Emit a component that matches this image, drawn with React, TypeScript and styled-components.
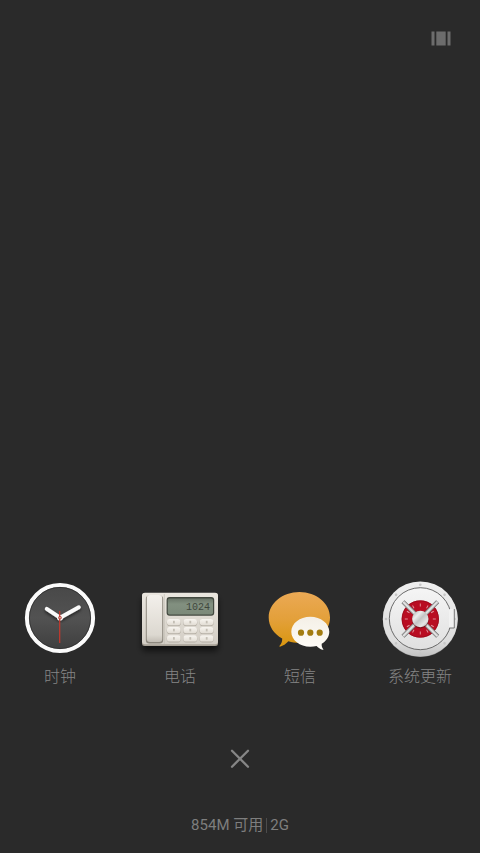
import React from "react";
import styled, { createGlobalStyle } from "styled-components";

const GlobalStyle = createGlobalStyle`
  * { box-sizing: border-box; }
  body {
    margin: 0;
    background: #2a2a2a;
    font-family: Roboto, "Noto Sans CJK SC", sans-serif;
  }
`;

const Screen = styled.main`
  display: flex;
  flex-direction: column;
  min-height: 100vh;
  background: #2a2a2a;
  color: #7e7e7e;
`;

const TopBar = styled.header`
  display: flex;
  justify-content: flex-end;
  padding: 24px 25px 0;
`;

const IconButton = styled.button`
  display: grid;
  place-items: center;
  padding: 4px;
  border: 0;
  background: none;
  color: inherit;
  cursor: pointer;
`;

const AppGrid = styled.section`
  display: grid;
  grid-template-columns: repeat(4, 1fr);
  margin-top: auto;
`;

const AppButton = styled.button`
  display: flex;
  flex-direction: column;
  align-items: center;
  gap: 3px;
  padding: 0;
  border: 0;
  background: none;
  color: #868686;
  font-family: inherit;
  font-size: 16px;
  font-weight: 300;
  line-height: 24px;
  cursor: pointer;
`;

const CloseRow = styled.div`
  display: flex;
  justify-content: center;
  padding: 56px 0 0;
`;

const Memory = styled.footer`
  display: flex;
  align-items: center;
  justify-content: center;
  gap: 3px;
  padding: 40px 0 16px;
  font-size: 15px;
  line-height: 24px;
`;

const Divider = styled.span`
  width: 1px;
  height: 15px;
  background: #4c4c4c;
`;

const LayoutIcon = () => (
  <svg width="20" height="20" viewBox="0 0 20 20" fill="#6c6c6c" aria-hidden="true">
    <rect x="0.5" y="3.5" width="3" height="14" />
    <rect x="5.3" y="3.5" width="9.4" height="14" />
    <rect x="16.5" y="3.5" width="3" height="14" />
  </svg>
);

const CloseIcon = () => (
  <svg width="20" height="20" viewBox="0 0 20 20" stroke="#868686" strokeWidth="2.3" strokeLinecap="round" aria-hidden="true">
    <path d="M2 1.7 18 17.7M18 1.7 2 17.7" />
  </svg>
);

const ClockIcon = () => (
  <svg width="88" height="88" viewBox="0 0 88 88" aria-hidden="true">
    <defs>
      <linearGradient id="clockFace" x1="0" y1="0" x2="0" y2="1">
        <stop offset="0" stopColor="#484848" />
        <stop offset="0.5" stopColor="#525252" />
        <stop offset="1" stopColor="#3e3e3e" />
      </linearGradient>
      <filter id="clockShadow" x="-30%" y="-30%" width="160%" height="180%">
        <feDropShadow dx="0" dy="2" stdDeviation="1.5" floodColor="#000" floodOpacity="0.55" />
      </filter>
    </defs>
    <circle cx="44" cy="44" r="33" fill="url(#clockFace)" />
    <circle cx="44" cy="44" r="33" fill="none" stroke="#fbfbfb" strokeWidth="4.2" />
    <circle cx="44" cy="44" r="30.6" fill="none" stroke="#2d2d2d" strokeWidth="0.8" />
    <g filter="url(#clockShadow)" stroke="#fafafa" strokeLinecap="round" strokeWidth="4">
      <path d="M44 43.7 30.8 34.8M44 43.7 62.8 33.3" />
    </g>
    <circle cx="44" cy="43.7" r="3" fill="#fafafa" />
    <circle cx="44" cy="43.7" r="1.8" fill="#b5463c" />
    <path d="M43.7 37V69" stroke="#c8382c" strokeWidth="1.2" />
    <circle cx="44" cy="43.7" r="0.8" fill="#e4d0cc" />
  </svg>
);

const keyColumns = [31, 47.4, 63.8];
const keyRows = [45, 53, 61.3];

const PhoneIcon = () => (
  <svg width="88" height="88" viewBox="0 0 88 88" aria-hidden="true">
    <defs>
      <linearGradient id="phoneBody" x1="0" y1="0" x2="0" y2="1">
        <stop offset="0" stopColor="#eae6df" />
        <stop offset="1" stopColor="#d3cec5" />
      </linearGradient>
      <linearGradient id="phoneHandset" x1="0" y1="0" x2="0" y2="1">
        <stop offset="0" stopColor="#f3f0eb" />
        <stop offset="0.85" stopColor="#dcd8d0" />
        <stop offset="1" stopColor="#c3beb5" />
      </linearGradient>
      <linearGradient id="phoneLcd" x1="0" y1="0" x2="0" y2="1">
        <stop offset="0" stopColor="#697467" />
        <stop offset="0.35" stopColor="#829080" />
        <stop offset="1" stopColor="#7b8979" />
      </linearGradient>
      <linearGradient id="phoneKey" x1="0" y1="0" x2="0" y2="1">
        <stop offset="0" stopColor="#f8f5f0" />
        <stop offset="1" stopColor="#e2ddd4" />
      </linearGradient>
      <filter id="phoneShadow" x="-20%" y="-20%" width="140%" height="160%">
        <feDropShadow dx="0" dy="5" stdDeviation="3" floodColor="#000" floodOpacity="0.6" />
      </filter>
    </defs>
    <rect x="6" y="19" width="76" height="53" rx="3" fill="#a7a196" filter="url(#phoneShadow)" />
    <rect x="6" y="18.8" width="76" height="51.5" rx="3" fill="url(#phoneBody)" />
    <rect x="9.8" y="21.5" width="17.4" height="48" rx="3.5" fill="#8d887e" />
    <rect x="10.8" y="21" width="15.4" height="47" rx="3" fill="url(#phoneHandset)" />
    <path d="M28.3 20V70" stroke="#bdb8ae" strokeWidth="0.6" />
    <rect x="30.6" y="23" width="47.6" height="18.8" rx="3" fill="#42483f" />
    <rect x="31.8" y="24.4" width="45.2" height="16.2" rx="1.8" fill="url(#phoneLcd)" />
    <text x="50" y="36" fill="#3f473d" fontFamily="Liberation Mono, monospace" fontSize="10">
      1024
    </text>
    {keyRows.map((y, row) =>
      keyColumns.map((x, column) => (
        <g key={`${row}-${column}`}>
          <rect x={x - 0.2} y={y + 0.5} width="14" height="6.6" rx="2.8" fill="#b5afa5" />
          <rect x={x} y={y} width="13.6" height="6.2" rx="2.6" fill="url(#phoneKey)" />
          <rect x={x + 6} y={y + 1.8} width="1.8" height="2.6" fill="#c3beb4" />
        </g>
      )),
    )}
  </svg>
);

const MessageIcon = () => (
  <svg width="88" height="88" viewBox="0 0 88 88" aria-hidden="true">
    <defs>
      <linearGradient id="bubbleFill" x1="0" y1="0" x2="0" y2="1">
        <stop offset="0" stopColor="#eba955" />
        <stop offset="0.5" stopColor="#e3a03a" />
        <stop offset="1" stopColor="#d9960f" />
      </linearGradient>
      <linearGradient id="replyFill" x1="0" y1="0" x2="0" y2="1">
        <stop offset="0" stopColor="#f4efe6" />
        <stop offset="1" stopColor="#fffdf8" />
      </linearGradient>
    </defs>
    <path
      d="M43.4 18C60.3 18 74 29.2 74 43.5S60.3 69 43.4 69C39.5 69 35.8 68.5 32.4 67.3C30 69.8 27 72 24 72.7C23.3 72.8 23.3 72.1 23.8 71.6C25.6 69.6 26.3 67.4 26.2 64.6C18 60 12.7 52.4 12.7 43.5C12.7 29.2 26.5 18 43.4 18Z"
      fill="url(#bubbleFill)"
    />
    <path
      d="M54.3 42.7C64.8 42.7 73.3 49.4 73.3 57.7C73.3 62.6 70.3 67 65.7 69.7C65.5 72 66 73.7 67.3 75.2C67.7 75.7 67.2 76 66.6 75.8C64.3 75.1 62.2 73.8 60.6 72C58.6 72.5 56.5 72.7 54.3 72.7C43.8 72.7 35.3 66 35.3 57.7S43.8 42.7 54.3 42.7Z"
      fill="url(#replyFill)"
    />
    <g fill="#a37c10">
      <circle cx="45" cy="58.7" r="3.1" />
      <circle cx="54.3" cy="58.7" r="3.1" />
      <circle cx="63.7" cy="58.7" r="3.1" />
    </g>
  </svg>
);

const spokes = [45, 135, 225, 315];
const rivets = Array.from({ length: 8 }, (_, index) => index * 45);
const ticks = Array.from({ length: 12 }, (_, index) => index * 30);

const UpdateIcon = () => (
  <svg width="88" height="88" viewBox="0 0 88 88" aria-hidden="true">
    <defs>
      <linearGradient id="safeRim" x1="0" y1="0" x2="0" y2="1">
        <stop offset="0" stopColor="#efefef" />
        <stop offset="0.8" stopColor="#dddddd" />
        <stop offset="1" stopColor="#c2c2c2" />
      </linearGradient>
      <linearGradient id="safeDoor" x1="0" y1="0" x2="0" y2="1">
        <stop offset="0" stopColor="#f5f5f5" />
        <stop offset="1" stopColor="#e0e0e0" />
      </linearGradient>
      <linearGradient id="safeHub" x1="0" y1="0" x2="1" y2="1">
        <stop offset="0" stopColor="#a8a8a8" />
        <stop offset="0.3" stopColor="#ececec" />
        <stop offset="0.5" stopColor="#c4c4c4" />
        <stop offset="0.75" stopColor="#e6e6e6" />
        <stop offset="1" stopColor="#959595" />
      </linearGradient>
    </defs>
    <circle cx="44.3" cy="45.6" r="37.4" fill="#8f8f8f" />
    <circle cx="44.3" cy="45" r="37.5" fill="url(#safeRim)" />
    {rivets.map((angle) => (
      <circle key={angle} cx="44.3" cy="10.7" r="1.3" fill="#c6c6c6" transform={`rotate(${angle} 44.3 45)`} />
    ))}
    <circle cx="44.3" cy="44.7" r="31" fill="url(#safeDoor)" stroke="#5c5c5c" strokeWidth="0.9" />
    <rect x="73" y="35" width="5.3" height="19" rx="0.8" fill="#f2f2f2" />
    <path d="M78.3 35V54H73.5" fill="none" stroke="#777777" strokeWidth="1" />
    <circle cx="44.3" cy="45" r="18.6" fill="#b90d22" />
    <circle cx="44.3" cy="45" r="18.2" fill="none" stroke="#970a1a" strokeWidth="0.8" />
    {ticks.map((angle) => (
      <path key={angle} d="M44.3 29.5V32.5" stroke="#e39aa2" strokeWidth="0.9" transform={`rotate(${angle} 44.3 45)`} />
    ))}
    {spokes.map((angle) => (
      <g key={angle} transform={`rotate(${angle} 44.3 45)`}>
        <path d="M44.3 38V20.5" stroke="#6a6a6a" strokeWidth="4.2" />
        <path d="M44.3 38V20.8" stroke="#bdbdbd" strokeWidth="3.2" />
        <path d="M44.3 38V20.8" stroke="#ececec" strokeWidth="1.2" />
      </g>
    ))}
    <circle cx="44.3" cy="46" r="8.5" fill="#5f1019" opacity="0.6" />
    <circle cx="44.3" cy="45" r="8.2" fill="url(#safeHub)" />
  </svg>
);

const apps = [
  { name: "时钟", Icon: ClockIcon },
  { name: "电话", Icon: PhoneIcon },
  { name: "短信", Icon: MessageIcon },
  { name: "系统更新", Icon: UpdateIcon },
];

export default function App() {
  return (
    <>
      <GlobalStyle />
      <Screen>
        <TopBar>
          <IconButton type="button" aria-label="切换布局">
            <LayoutIcon />
          </IconButton>
        </TopBar>
        <AppGrid aria-label="最近任务">
          {apps.map(({ name, Icon }) => (
            <AppButton key={name} type="button">
              <Icon />
              <span>{name}</span>
            </AppButton>
          ))}
        </AppGrid>
        <CloseRow>
          <IconButton type="button" aria-label="全部清除">
            <CloseIcon />
          </IconButton>
        </CloseRow>
        <Memory>
          <span>854M 可用</span>
          <Divider />
          <span>2G</span>
        </Memory>
      </Screen>
    </>
  );
}
